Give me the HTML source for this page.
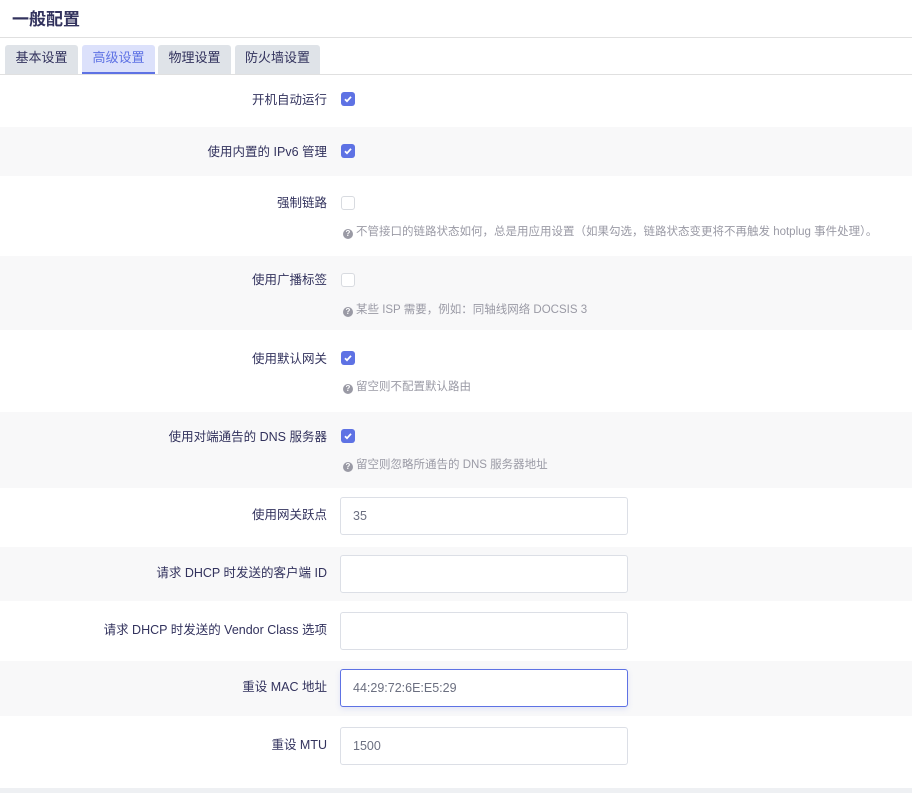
<!DOCTYPE html>
<html><head><meta charset="utf-8"><style>
*{box-sizing:border-box;margin:0;padding:0}
body{width:912px;height:793px;background:#fff;font-family:"Liberation Sans","Noto Sans CJK SC",sans-serif;color:#32325d;position:relative;overflow:hidden}
.title{position:absolute;left:12px;top:5px;font-size:17px;font-weight:bold;color:#32325d}
.hl{position:absolute;left:0;right:0;top:37px;height:1px;background:#e0e0e0}
.tab{position:absolute;top:45px;height:29px;background:#dfe3e8;border-radius:3px 3px 0 0;font-size:13px;line-height:26px;text-align:center;color:#32325d}
.tab.act{background:#dce1fb;color:#5e72e4;border-bottom:2px solid #5e72e4}
.tl{position:absolute;left:0;right:0;top:74px;height:1px;background:#e0e0e0}
.row{position:absolute;left:0;right:0}
.g{background:#f8f8f9}
.lab{position:absolute;right:585px;font-size:12.5px;color:#32325d;white-space:nowrap;margin-top:-2px}
.cb{position:absolute;left:341px;width:14px;height:14px;border-radius:3px;background:#5e72e4}
.cb svg{position:absolute;left:2px;top:2px}
.cb.off{background:#fff;border:1px solid #d8dbe0}
.help{position:absolute;left:343px;font-size:11.5px;color:#9a9aa5;white-space:nowrap;margin-top:-2px}
.help b{display:inline-block;width:10px;height:10px;border-radius:50%;background:#9a9aa5;color:#fff;font-size:8px;line-height:10px;text-align:center;margin-right:3px;vertical-align:-1px}
.in{position:absolute;left:340px;width:288px;height:38px;border:1px solid #dcdfe6;border-radius:3px;background:#fff;font-size:12.5px;color:#6b6f80;padding-left:12px;line-height:36px}
.in.f{border-color:#5e72e4;box-shadow:0 2px 6px rgba(94,114,228,.15)}
</style></head><body>
<div class="title">一般配置</div><div class="hl"></div>
<div class="tab" style="left:5px;width:73px">基本设置</div>
<div class="tab act" style="left:82px;width:73px">高级设置</div>
<div class="tab" style="left:158px;width:73px">物理设置</div>
<div class="tab" style="left:235px;width:85px">防火墙设置</div>
<div class="tl"></div>

<div class="row g" style="top:127px;height:49px"></div>
<div class="row g" style="top:256px;height:74px"></div>
<div class="row g" style="top:412px;height:76px"></div>
<div class="row g" style="top:547px;height:54px"></div>
<div class="row g" style="top:661px;height:55px"></div>
<div class="row" style="top:788px;height:5px;background:#eef0f3"></div>

<div class="lab" style="top:91px">开机自动运行</div>
<div class="cb" style="top:92px"><svg width="10" height="10" viewBox="0 0 10 10"><path d="M2 5.2l2 2 4-4.4" stroke="#fff" stroke-width="1.8" fill="none"/></svg></div>

<div class="lab" style="top:143px">使用内置的 IPv6 管理</div>
<div class="cb" style="top:144px"><svg width="10" height="10" viewBox="0 0 10 10"><path d="M2 5.2l2 2 4-4.4" stroke="#fff" stroke-width="1.8" fill="none"/></svg></div>

<div class="lab" style="top:194px">强制链路</div>
<div class="cb off" style="top:196px"></div>
<div class="help" style="top:225px"><b>?</b>不管接口的链路状态如何，总是用应用设置（如果勾选，链路状态变更将不再触发 hotplug 事件处理）。</div>

<div class="lab" style="top:271px">使用广播标签</div>
<div class="cb off" style="top:273px"></div>
<div class="help" style="top:303px"><b>?</b>某些 ISP 需要，例如：同轴线网络 DOCSIS 3</div>

<div class="lab" style="top:350px">使用默认网关</div>
<div class="cb" style="top:351px"><svg width="10" height="10" viewBox="0 0 10 10"><path d="M2 5.2l2 2 4-4.4" stroke="#fff" stroke-width="1.8" fill="none"/></svg></div>
<div class="help" style="top:380px"><b>?</b>留空则不配置默认路由</div>

<div class="lab" style="top:428px">使用对端通告的 DNS 服务器</div>
<div class="cb" style="top:429px"><svg width="10" height="10" viewBox="0 0 10 10"><path d="M2 5.2l2 2 4-4.4" stroke="#fff" stroke-width="1.8" fill="none"/></svg></div>
<div class="help" style="top:458px"><b>?</b>留空则忽略所通告的 DNS 服务器地址</div>

<div class="lab" style="top:506px">使用网关跃点</div>
<div class="in" style="top:497px">35</div>

<div class="lab" style="top:564px">请求 DHCP 时发送的客户端 ID</div>
<div class="in" style="top:555px"></div>

<div class="lab" style="top:621px">请求 DHCP 时发送的 Vendor Class 选项</div>
<div class="in" style="top:612px"></div>

<div class="lab" style="top:678px">重设 MAC 地址</div>
<div class="in f" style="top:669px">44:29:72:6E:E5:29</div>

<div class="lab" style="top:736px">重设 MTU</div>
<div class="in" style="top:727px">1500</div>
</body></html>
